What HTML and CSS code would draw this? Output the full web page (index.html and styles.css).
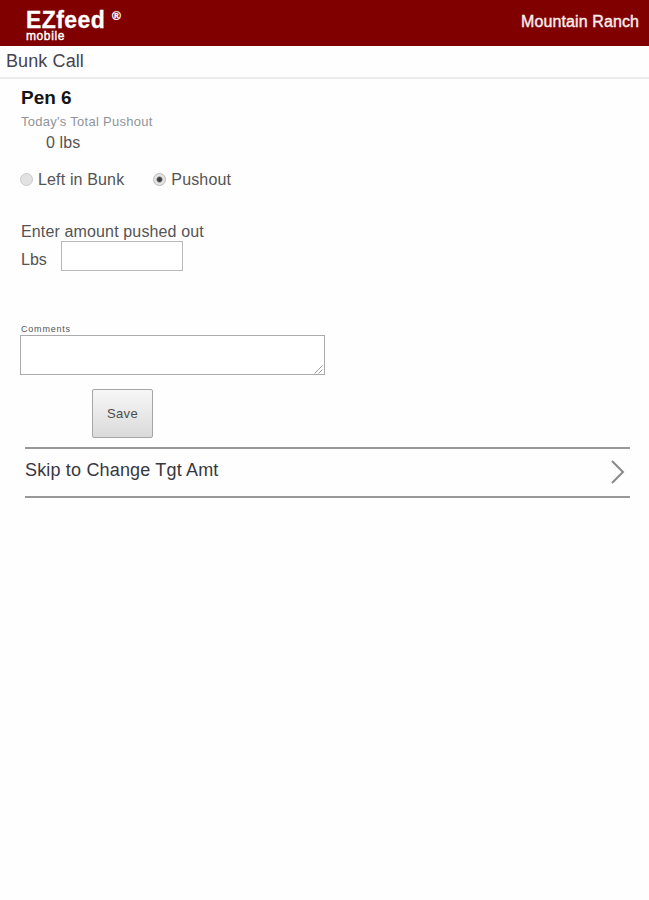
FILE: index.html
```html
<!DOCTYPE html>
<html lang="en">
<head>
<meta charset="utf-8">
<title>EZfeed mobile - Bunk Call</title>
<link rel="stylesheet" href="styles.css">
</head>
<body>
<header class="topbar">
  <div class="brand">
    <div class="brand-name"><span>EZfeed</span><span class="reg">®</span></div>
    <div class="brand-sub">mobile</div>
  </div>
  <div class="ranch">Mountain Ranch</div>
</header>
<h1 class="page-title">Bunk Call</h1>
<main>
  <form class="form">
    <h2 class="pen">Pen 6</h2>
    <div class="total-label">Today's Total Pushout</div>
    <div class="total">0 lbs</div>
    <div class="choices">
      <label class="choice"><input class="radio" type="radio" name="mode"><span>Left in Bunk</span></label>
      <label class="choice"><input class="radio" type="radio" name="mode" checked><span>Pushout</span></label>
    </div>
    <div class="prompt">Enter amount pushed out</div>
    <div class="amount-row"><label class="lbs" for="amount">Lbs</label><input class="amount" id="amount" type="text"></div>
    <label class="comments-label" for="comments">Comments</label>
    <div class="comments-box">
      <textarea class="comments" id="comments"></textarea>
      <svg class="grip" width="9" height="9" viewBox="0 0 9 9"><path d="M0.5 8.5L8.5 0.5M4.5 8.5L8.5 4.5"/></svg>
    </div>
    <button class="save" type="button">Save</button>
  </form>
  <a class="skip"><span>Skip to Change Tgt Amt</span>
    <svg class="chevron" width="16" height="26" viewBox="0 0 16 26"><path d="M2 2L13 13L2 24"/></svg>
  </a>
</main>
</body>
</html>
```
FILE: styles.css
```css
* { box-sizing: border-box; }
body {
  margin: 0;
  background: #fefefe;
  color: #545454;
  font: 16px/20px "Liberation Sans", Arial, sans-serif;
}
.topbar {
  display: flex;
  justify-content: space-between;
  height: 46px;
  padding: 9px 10px 0 26px;
  background: #800000;
  color: #fff;
}
.brand-name { display: flex; gap: 7px; font-size: 23px; line-height: 23px; font-weight: bold; letter-spacing: 0.4px; -webkit-text-stroke: 0.3px #fff; }
.reg { font-size: 12px; line-height: 14px; letter-spacing: 0; }
.brand-sub { margin-top: -2px; font-size: 12px; line-height: 12px; letter-spacing: 0.6px; -webkit-text-stroke: 0.4px #fff; }
.ranch { font-size: 16px; line-height: 25px; letter-spacing: 0.1px; color: #f8eeee; -webkit-text-stroke: 0.4px #f8eeee; }
.page-title {
  height: 33px;
  margin: 0;
  padding-left: 6px;
  border-bottom: 2px solid #ececec;
  color: #44444f;
  font-size: 18px;
  font-weight: normal;
  letter-spacing: 0.1px;
  line-height: 31px;
}
.form { padding: 8px 20px 0; }
.pen { margin: 0 0 0 1px; color: #151515; font-size: 19px; line-height: 22px; }
.total-label { margin: 4px 0 0 1px; color: #909498; font-size: 13px; line-height: 18px; letter-spacing: 0.28px; }
.total { padding-left: 26px; line-height: 24px; letter-spacing: 0.1px; }
.choices { display: flex; gap: 29px; margin-top: 15px; letter-spacing: 0.15px; }
.choice { display: flex; align-items: center; gap: 5px; height: 20px; }
.radio {
  appearance: none;
  width: 13px;
  height: 13px;
  margin: -2px 0 0;
  border: 1px solid #cacaca;
  border-radius: 50%;
  background: #e2e2e2;
}
.radio:checked { border-color: #b8b8b8; background: radial-gradient(circle, #404040 0 2px, #e4e4e4 3.5px); }
.prompt { margin: 32px 0 0 1px; letter-spacing: 0.14px; }
.amount-row { display: flex; align-items: center; margin-top: -1px; }
.lbs { width: 41px; padding: 7px 0 0 1px; }
.amount { width: 122px; height: 30px; border: 1px solid #b8b8b8; background: #fff; }
.comments-label { display: block; margin: 52px 0 0 1px; font-size: 9px; line-height: 12px; letter-spacing: 0.8px; }
.comments-box { position: relative; width: 305px; height: 40px; }
.comments { display: block; width: 100%; height: 100%; resize: none; border: 1px solid #aaa; background: #fff; }
.grip { position: absolute; right: 2px; bottom: 1px; fill: none; stroke: #a0a0a0; }
.save {
  display: block;
  width: 61px;
  height: 49px;
  margin: 14px 0 0 72px;
  padding: 0;
  border: 1px solid #a6a6a6;
  border-radius: 2px;
  background: linear-gradient(#f7f7f7, #dadada);
  color: #4c4c4c;
  font: 13px "Liberation Sans", Arial, sans-serif;
  letter-spacing: 0.4px;
}
.skip {
  display: flex;
  align-items: center;
  justify-content: space-between;
  height: 51px;
  margin: 9px 19px 0 25px;
  padding-right: 4px;
  border-top: 2px solid #999;
  border-bottom: 2px solid #999;
  color: #38383e;
  font-size: 18px;
  letter-spacing: 0.17px;
}
.skip span { margin-top: -5px; }
.chevron { margin-top: -1px; fill: none; stroke: #888; stroke-width: 2; }
```
